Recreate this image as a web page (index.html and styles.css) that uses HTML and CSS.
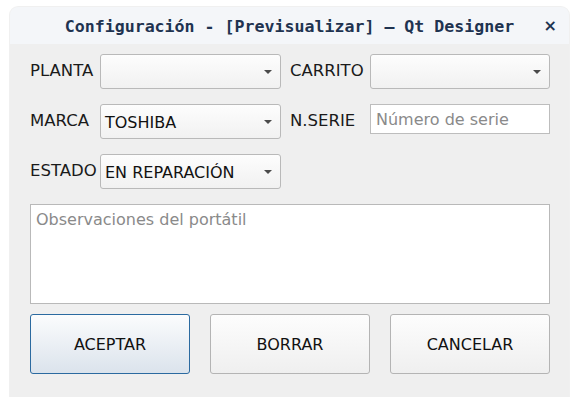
FILE: index.html
```html
<!DOCTYPE html>
<html lang="es">
<head>
<meta charset="utf-8">
<title>Configuración</title>
<link rel="stylesheet" href="styles.css">
</head>
<body>
<div class="window">
  <div class="titlebar">
    <span class="title">Configuración - [Previsualizar] — Qt Designer</span>
    <span class="close">×</span>
  </div>
  <div class="content">
    <div class="grid">
      <label class="lbl">PLANTA</label>
      <div class="combo"><span class="combo-text"></span><span class="arrow"></span></div>
      <label class="lbl lbl2">CARRITO</label>
      <div class="combo"><span class="combo-text"></span><span class="arrow"></span></div>

      <label class="lbl">MARCA</label>
      <div class="combo"><span class="combo-text">TOSHIBA</span><span class="arrow"></span></div>
      <label class="lbl lbl2">N.SERIE</label>
      <div class="lineedit-wrap"><div class="lineedit">Número de serie</div></div>

      <label class="lbl">ESTADO</label>
      <div class="combo"><span class="combo-text">EN REPARACIÓN</span><span class="arrow"></span></div>
      <div></div>
      <div></div>
    </div>
    <div class="textarea">Observaciones del portátil</div>
    <div class="buttons">
      <div class="btn btn-default">ACEPTAR</div>
      <div class="btn">BORRAR</div>
      <div class="btn">CANCELAR</div>
    </div>
  </div>
</div>
</body>
</html>
```

FILE: styles.css
```css
html, body {
  margin: 0;
  padding: 0;
  background: #ffffff;
}
body {
  padding: 7px 10px 0 10px;
  font-family: "DejaVu Sans", sans-serif;
}
.window {
  width: 559px;
  height: 390px;
  background: #efefef;
  border-radius: 8px 8px 0 0;
  overflow: hidden;
  display: flex;
  flex-direction: column;
  box-shadow: 0 0 0 1px rgba(0,0,0,0.06);
}
.titlebar {
  position: relative;
  height: 37px;
  background: #f4f6f9;
  display: flex;
  align-items: center;
  justify-content: center;
}
.title {
  font-family: "DejaVu Sans Mono", monospace;
  font-weight: bold;
  font-size: 16.6px;
  color: #1f3350;
  padding-top: 1px;
}
.close {
  position: absolute;
  right: 12px;
  top: 9px;
  font-family: "DejaVu Sans", sans-serif;
  font-weight: bold;
  font-size: 16px;
  color: #1f3350;
}
.content {
  padding: 10px 19px 0 20px;
  display: flex;
  flex-direction: column;
}
.grid {
  display: grid;
  grid-template-columns: 70px 181px 89px 180px;
  grid-auto-rows: 35px;
  row-gap: 15px;
}
.lbl {
  font-size: 16.5px;
  color: #1a1a1a;
  display: flex;
  align-items: center;
  padding-bottom: 3px;
}
.lbl2 {
  padding-left: 9px;
}
.combo {
  box-sizing: border-box;
  border: 1px solid #b9b9b9;
  border-radius: 3px;
  background: linear-gradient(#fdfdfd, #f1f1f1);
  display: flex;
  align-items: center;
  padding: 2px 0 0 4px;
}
.combo-text {
  flex: 1;
  font-size: 16px;
  color: #111;
}
.arrow {
  width: 0;
  height: 0;
  border-left: 4px solid transparent;
  border-right: 4px solid transparent;
  border-top: 4px solid #4a4a4a;
  margin-right: 8px;
  margin-top: -2px;
}
.lineedit-wrap {
  display: flex;
  align-items: flex-start;
}
.lineedit {
  box-sizing: border-box;
  width: 180px;
  height: 30px;
  border: 1px solid #bdbdbd;
  background: #ffffff;
  font-size: 16px;
  color: #8a8a8a;
  padding: 5px 0 0 5px;
}
.textarea {
  box-sizing: border-box;
  margin-top: 15px;
  width: 520px;
  height: 100px;
  border: 1px solid #b9b9b9;
  background: #ffffff;
  font-size: 16px;
  color: #8a8a8a;
  padding: 5px 0 0 5px;
}
.buttons {
  margin-top: 10px;
  display: flex;
  gap: 20px;
}
.btn {
  box-sizing: border-box;
  flex: none;
  width: 160px;
  height: 60px;
  border: 1px solid #b4b4b4;
  border-radius: 3px;
  background: linear-gradient(#fdfdfd, #efefef);
  display: flex;
  align-items: center;
  justify-content: center;
  font-size: 16px;
  color: #111;
}
.btn-default {
  border-color: #2b6aa0;
  background: linear-gradient(#fbfcfd, #dbe3ec);
}
```
